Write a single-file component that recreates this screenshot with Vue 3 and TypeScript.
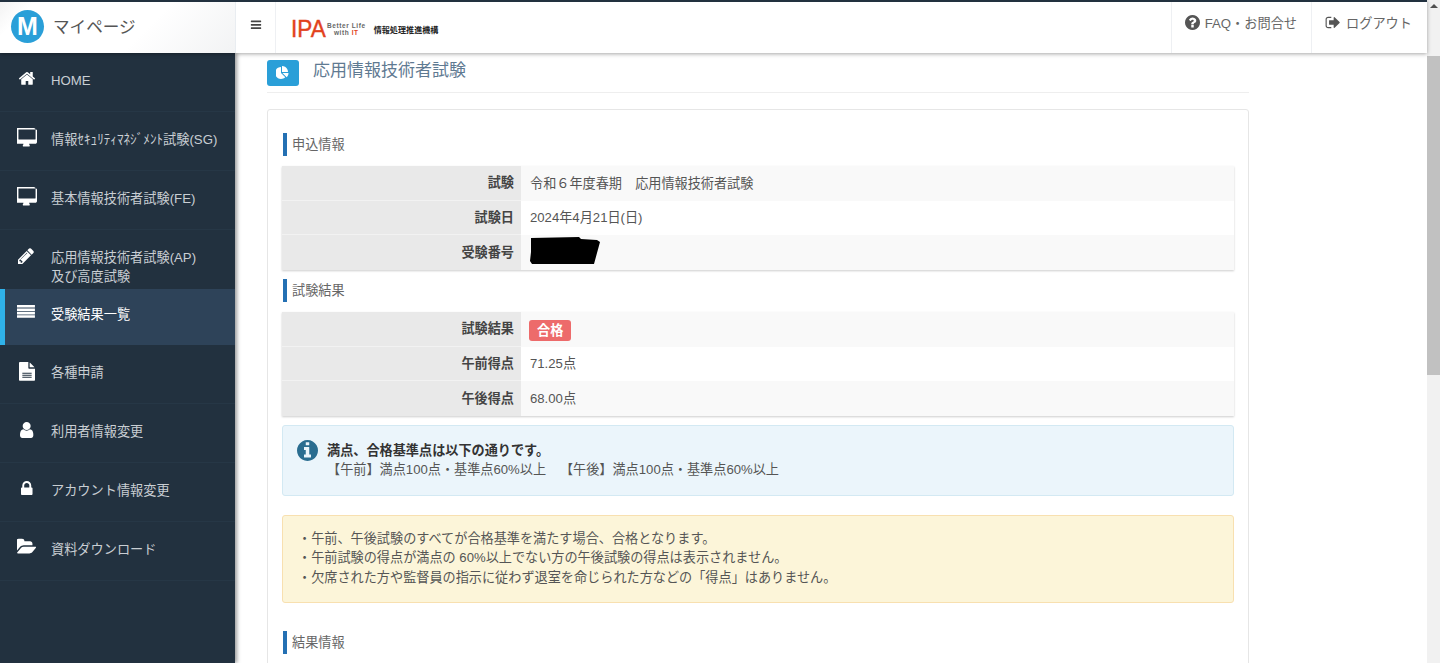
<script setup lang="ts">
const P = {
  home: 'M1472 992v480q0 26-19 45t-45 19h-384v-384h-256v384h-384q-26 0-45-19t-19-45v-480q0-1 .5-3t.5-3l575-474 575 474q1 2 1 6zm223-69l-62 74q-8 9-21 11h-3q-13 0-21-7l-692-577-692 577q-12 8-24 7-13-2-21-11l-62-74q-8-10-7-23.5t11-21.5l719-599q32-26 76-26t76 26l244 204v-195q0-14 9-23t23-9h192q14 0 23 9t9 23v408l219 182q10 8 11 21.5t-7 23.5z',
  desktop: 'M1664 1120v-832q0-13-9.5-22.5t-22.5-9.5h-1472q-13 0-22.5 9.5t-9.5 22.5v832q0 13 9.5 22.5t22.5 9.5h1472q13 0 22.5-9.5t9.5-22.5zm128-832v1088q0 66-47 113t-113 47h-544q0 37 16 77.5t32 71 16 43.5q0 26-19 45t-45 19h-512q-26 0-45-19t-19-45q0-14 16-44t32-70 16-78h-544q-66 0-113-47t-47-113v-1088q0-66 47-113t113-47h1472q66 0 113 47t47 113z',
  pencil: 'M491 1536l91-91-235-235-91 91v107h128v128h107zm523-928q0-22-22-22-10 0-17 7l-542 542q-7 7-7 17 0 22 22 22 10 0 17-7l542-542q7-7 7-17zm-54-192l416 416-832 832h-416v-416zm683 96q0 53-37 90l-166 166-416-416 166-165q36-38 90-38 53 0 91 38l235 234q37 39 37 91z',
  list: 'M0 256h1792v260H0zM0 596h1792v260H0zM0 936h1792v260H0zM0 1276h1792v260H0z',
  file: 'M1024 512V40q22 14 36 28l408 408q14 14 28 36h-472zM896 544q0 40 28 68t68 28h544v1056q0 40-28 68t-68 28H96q-40 0-68-28t-28-68V96q0-40 28-68T96 0h800v544zM320 1024v96h896v-96H320zm0 192v96h896v-96H320zm0 192v96h896v-96H320z',
  user: 'M1536 1399q0 109-62.5 187t-150.5 78h-854q-88 0-150.5-78t-62.5-187q0-85 8.5-160.5t31.5-152 58.5-131 94-89 134.5-34.5q131 128 313 128t313-128q76 0 134.5 34.5t94 89 58.5 131 31.5 152 8.5 160.5zm-256-887q0 159-112.5 271.5t-271.5 112.5-271.5-112.5-112.5-271.5 112.5-271.5 271.5-112.5 271.5 112.5 112.5 271.5z',
  lock: 'M640 768h512v-192q0-106-75-181t-181-75-181 75-75 181v192zm832 96v576q0 40-28 68t-68 28h-960q-40 0-68-28t-28-68v-576q0-40 28-68t68-28h32v-192q0-184 132-316t316-132 316 132 132 316v192h32q40 0 68 28t28 68z',
  folder: 'M1815 952q0 31-31 66l-336 396q-43 51-120.5 86.5t-143.5 35.5h-1088q-34 0-60.5-13t-26.5-43q0-31 31-66l336-396q43-51 120.5-86.5t143.5-35.5h1088q34 0 60.5 13t26.5 43zm-343-344v160h-832q-94 0-197 47.5t-164 119.5l-337 396-5 6q0-4-.5-12.5t-.5-12.5v-960q0-92 66-158t158-66h320q92 0 158 66t66 158v32h544q92 0 158 66t66 158z',
  bars: 'M1664 1344v128q0 26-19 45t-45 19h-1408q-26 0-45-19t-19-45v-128q0-26 19-45t45-19h1408q26 0 45 19t19 45zm0-512v128q0 26-19 45t-45 19h-1408q-26 0-45-19t-19-45v-128q0-26 19-45t45-19h1408q26 0 45 19t19 45zm0-512v128q0 26-19 45t-45 19h-1408q-26 0-45-19t-19-45v-128q0-26 19-45t45-19h1408q26 0 45 19t19 45z',
  pie: 'M768 890l546 546q-106 108-247.5 168t-298.5 60q-209 0-385.5-103t-279.5-279.5-103-385.5 103-385.5 279.5-279.5 385.5-103v762zm187 6h773q0 157-60 298.5t-168 247.5zm709-128h-768v-768q209 0 385.5 103t279.5 279.5 103 385.5z',
  question: 'M1024 1376v-192q0-14-9-23t-23-9h-192q-14 0-23 9t-9 23v192q0 14 9 23t23 9h192q14 0 23-9t9-23zm256-672q0-88-55.5-163t-138.5-116-170-41q-243 0-371 213-15 24 8 42l132 100q7 6 19 6 16 0 25-12 53-68 86-92 34-24 86-24 48 0 85.5 26t37.5 59q0 38-20 61t-68 45q-63 28-115.5 86.5t-52.5 125.5v36q0 14 9 23t23 9h192q14 0 23-9t9-23q0-19 21.5-49.5t54.5-49.5q32-18 49-28.5t46-35 44.5-48 28-60.5 12.5-81zm384 192q0 209-103 385.5t-279.5 279.5-385.5 103-385.5-103-279.5-279.5-103-385.5 103-385.5 279.5-279.5 385.5-103 385.5 103 279.5 279.5 103 385.5z',
  info: 'M1152 1376v-160q0-14-9-23t-23-9h-96v-512q0-14-9-23t-23-9h-320q-14 0-23 9t-9 23v160q0 14 9 23t23 9h96v320h-96q-14 0-23 9t-9 23v160q0 14 9 23t23 9h448q14 0 23-9t9-23zm-128-896v-160q0-14-9-23t-23-9h-192q-14 0-23 9t-9 23v160q0 14 9 23t23 9h192q14 0 23-9t9-23zm640 416q0 209-103 385.5t-279.5 279.5-385.5 103-385.5-103-279.5-279.5-103-385.5 103-385.5 279.5-279.5 385.5-103 385.5 103 279.5 279.5 103 385.5z',
  signout: 'M704 1440q0 4 1 20t.5 26.5-3 23.5-10 19.5-20.5 6.5h-320q-119 0-203.5-84.5t-84.5-203.5v-704q0-119 84.5-203.5t203.5-84.5h320q13 0 22.5 9.5t9.5 22.5q0 4 1 20t.5 26.5-3 23.5-10 19.5-20.5 6.5h-320q-66 0-113 47t-47 113v704q0 66 47 113t113 47h312l11.5 1 11.5 3 8 5.5 7 9 2 13.5zm928-544q0 26-19 45l-544 544q-19 19-45 19t-45-19-19-45v-288h-448q-26 0-45-19t-19-45v-384q0-26 19-45t45-19h448v-288q0-26 19-45t45-19 45 19l544 544q19 19 19 45z',
}

interface Nav { label: string; sub?: string; icon: string; vb: string; active?: boolean }
const nav: Nav[] = [
  { label: 'HOME', icon: P.home, vb: '-103 -44 2000 2000' },
  { label: '情報ｾｷｭﾘﾃｨﾏﾈｼﾞﾒﾝﾄ試験(SG)', icon: P.desktop, vb: '0 128 1792 1792' },
  { label: '基本情報技術者試験(FE)', icon: P.desktop, vb: '0 128 1792 1792' },
  { label: '応用情報技術者試験(AP)', sub: '及び高度試験', icon: P.pencil, vb: '32 -64 1920 1920' },
  { label: '受験結果一覧', icon: P.list, vb: '0 56 2000 2000', active: true },
  { label: '各種申請', icon: P.file, vb: '-192 -96 1920 1920' },
  { label: '利用者情報変更', icon: P.user, vb: '-32 -64 1920 1920' },
  { label: 'アカウント情報変更', icon: P.lock, vb: '-80 -72 2000 2000' },
  { label: '資料ダウンロード', icon: P.folder, vb: '0 66 1905 1905' },
]

const applyRows = [
  { th: '試験', td: '令和６年度春期　応用情報技術者試験' },
  { th: '試験日', td: '2024年4月21日(日)' },
  { th: '受験番号', td: '', redacted: true },
]
const resultRows = [
  { th: '試験結果', td: '', pass: true },
  { th: '午前得点', td: '71.25点' },
  { th: '午後得点', td: '68.00点' },
]
</script>

<template>
  <div class="page">
    <div class="viewport">
      <header class="topbar">
        <div class="brand">
          <span class="brand-mark">M</span>
          <span class="brand-name">マイページ</span>
        </div>
        <div class="toggle">
          <svg class="toggle-icon" viewBox="0 256 1792 1344"><path :d="P.bars" /></svg>
        </div>
        <div class="logo">
          <span class="logo-ipa">IPA</span>
          <span class="logo-tag"><span>Better Life</span><span>with <b>IT</b></span></span>
          <span class="logo-org">情報処理推進機構</span>
        </div>
        <nav class="top-links">
          <a class="top-link faq">
            <svg class="top-icon" viewBox="128 128 1536 1536"><path :d="P.question" /></svg>
            FAQ・お問合せ
          </a>
          <a class="top-link out">
            <svg class="top-icon" viewBox="0 128 1664 1536"><path :d="P.signout" /></svg>
            ログアウト
          </a>
        </nav>
      </header>

      <div class="below">
        <aside class="sidebar">
          <a v-for="n in nav" :key="n.label" class="nav-item" :class="{ active: n.active, two: n.sub }">
            <svg class="nav-icon" :viewBox="n.vb"><path :d="n.icon" /></svg>
            <span class="nav-label">{{ n.label }}<template v-if="n.sub"><br />{{ n.sub }}</template></span>
          </a>
        </aside>

        <main class="main">
          <div class="title-row">
            <span class="title-icon">
              <svg viewBox="128 0 1792 1792"><path :d="P.pie" /></svg>
            </span>
            <h1 class="title">応用情報技術者試験</h1>
          </div>

          <section class="card">
            <h2 class="heading">申込情報</h2>
            <div class="table">
              <div v-for="r in applyRows" :key="r.th" class="row">
                <div class="th">{{ r.th }}</div>
                <div class="td">
                  {{ r.td }}
                  <svg v-if="r.redacted" class="redact" viewBox="0 0 72 28">
                    <polygon points="2,1 50,0 52,2 68,3 71,5 65,27 3,27 1,24 2,15" />
                  </svg>
                </div>
              </div>
            </div>

            <h2 class="heading second">試験結果</h2>
            <div class="table">
              <div v-for="r in resultRows" :key="r.th" class="row">
                <div class="th">{{ r.th }}</div>
                <div class="td">
                  <span v-if="r.pass" class="badge">合格</span>
                  {{ r.td }}
                </div>
              </div>
            </div>

            <div class="alert-info">
              <svg class="info-icon" viewBox="128 128 1536 1536"><path :d="P.info" /></svg>
              <div>
                <strong>満点、合格基準点は以下の通りです。</strong><br />
                【午前】満点100点・基準点60%以上&nbsp;&nbsp;　【午後】満点100点・基準点60%以上
              </div>
            </div>

            <div class="alert-warn">
              ・午前、午後試験のすべてが合格基準を満たす場合、合格となります。<br />
              ・午前試験の得点が満点の 60%以上でない方の午後試験の得点は表示されません。<br />
              ・欠席された方や監督員の指示に従わず退室を命じられた方などの「得点」はありません。
            </div>

            <h2 class="heading third">結果情報</h2>
          </section>
        </main>
      </div>
    </div>

    <div class="scrollbar">
      <span class="arrow"></span>
      <span class="thumb"></span>
    </div>
  </div>
</template>

<style>
html, body { margin: 0; overflow: hidden; background: #fff; }
</style>

<style scoped>
.page {
  display: flex;
  width: 1440px;
  height: 663px;
  overflow: hidden;
  font-family: "Liberation Sans", "Noto Sans CJK JP", sans-serif;
  font-size: 13.15px;
  color: #555;
}
.viewport {
  flex: 1;
  min-width: 0;
  display: flex;
  flex-direction: column;
}
.topbar {
  position: relative;
  z-index: 3;
  flex: none;
  display: flex;
  align-items: stretch;
  height: 51px;
  border-top: 2px solid #22313f;
  background: #fff;
  box-shadow: 0 1px 4px rgba(0, 0, 0, .35);
}
.brand {
  width: 236px;
  flex: none;
  display: flex;
  align-items: center;
  gap: 9px;
  padding: 0 0 2px 11px;
  box-sizing: border-box;
  background: linear-gradient(135deg, #f3f3f3 0, #fff 12%, #fff 60%, #f2f3f4 100%);
  border-right: 1px solid #e9edf1;
}
.brand-mark {
  width: 33px;
  height: 33px;
  border-radius: 50%;
  background: #2a9fd8;
  color: #fff;
  font-weight: 700;
  font-size: 25px;
  line-height: 33px;
  text-align: center;
}
.brand-name {
  font-size: 16.6px;
  color: #555;
  margin-bottom: 2px;
}
.toggle {
  flex: none;
  display: flex;
  align-items: center;
  justify-content: center;
  padding-bottom: 5px;
  box-sizing: border-box;
  border-right: 1px solid #eef0f3;
  width: 40px;
}
.toggle-icon { width: 12px; height: 10px; fill: #444; }
.logo {
  display: flex;
  align-items: center;
  padding: 3px 0 0 15px;
  color: #222;
}
.logo-ipa {
  font-size: 24px;
  font-weight: 400;
  color: #e2421c;
  line-height: 1;
  -webkit-text-stroke: .4px #e2421c;
  transform: scaleX(.94);
  transform-origin: left center;
  margin-right: -3px;
}
.logo-tag {
  display: flex;
  flex-direction: column;
  align-items: center;
  margin-left: 2px;
  padding-bottom: 1px;
  font-size: 6.5px;
  line-height: 7px;
  font-weight: 700;
  color: #666;
  letter-spacing: .6px;
}
.logo-tag b { color: #e2421c; }
.logo-org {
  margin-left: 8px;
  font-size: 8.1px;
  font-weight: 700;
}
.top-links {
  margin-left: auto;
  display: flex;
}
.top-link {
  display: flex;
  align-items: center;
  gap: 5px;
  padding: 0 14px 10px 13px;
  border-left: 1px solid #eef0f3;
  font-size: 13.2px;
  color: #666;
}
.out { padding-right: 15px; gap: 6px; }
.top-icon { width: 15px; height: 15px; fill: #555; }

.below {
  flex: 1;
  min-height: 0;
  display: flex;
}
.sidebar {
  position: relative;
  z-index: 2;
  width: 235px;
  flex: none;
  background: #22313f;
  box-shadow: 2px 0 4px rgba(0, 0, 0, .4);
}
.nav-item {
  display: flex;
  box-sizing: border-box;
  height: 59px;
  padding: 18px 0 0 17px;
  gap: 14px;
  border-bottom: 1px solid #263746;
  color: #c9ced3;
  font-size: 13.2px;
  line-height: 19px;
}
.nav-item.two { border-bottom: 0; }
.nav-item.active {
  height: 56px;
  padding-left: 12px;
  border-left: 5px solid #2fb2ea;
  border-bottom: 0;
  background: #2e4359;
  color: #fff;
  padding-top: 16px;
}
.nav-icon {
  flex: none;
  width: 20px;
  height: 20px;
  fill: #fff;
  margin-top: -2px;
}
.nav-label { white-space: nowrap; }

.main {
  flex: 1;
  min-width: 0;
  overflow: hidden;
  padding: 7px 178px 0 32px;
  background: #fff;
}
.title-row {
  display: flex;
  gap: 14px;
  height: 32px;
  border-bottom: 1px solid #eee;
  margin-bottom: 16px;
}
.title-icon {
  width: 32px;
  height: 26px;
  border-radius: 3px;
  background: #2a9fd8;
  display: flex;
  align-items: center;
  justify-content: center;
}
.title-icon svg { width: 14px; height: 14px; fill: #fff; }
.title {
  margin: 1px 0 0;
  font-size: 17px;
  font-weight: 400;
  line-height: 20px;
  color: #5f7a92;
}
.card {
  border: 1px solid #e6e6e6;
  border-radius: 3px;
  padding: 23px 14px 40px;
}
.heading {
  margin: 0 0 10px 1px;
  height: 23px;
  border-left: 4px solid #2470b3;
  padding-left: 5px;
  font-size: 13.15px;
  font-weight: 400;
  line-height: 23px;
  color: #666;
}
.second { margin-top: 9px; }
.third { margin-top: 28px; }
.table {
  box-shadow: 0 1px 2px rgba(0, 0, 0, .2);
}
.row {
  display: grid;
  grid-template-columns: 239px 1fr;
  height: 34.67px;
}
.th {
  display: flex;
  align-items: center;
  justify-content: flex-end;
  padding: 0 7px 2px 0;
  background: #e9e9e9;
  border-bottom: 1px solid #f2f2f2;
  font-weight: 700;
  color: #444;
}
.row:last-child .th { border-bottom: 0; }
.td {
  display: flex;
  align-items: center;
  padding: 0 0 2px 9px;
  color: #555;
  background: #fff;
}
.row:nth-child(odd) .td { background: #f9f9f9; }
.redact { width: 72px; height: 28px; fill: #000; margin: 0 0 1px -1px; }
.badge {
  display: inline-block;
  margin: 4px 0 0 -1px;
  padding: 0 8px;
  height: 21px;
  line-height: 21px;
  border-radius: 3px;
  background: #ed6b6b;
  color: #fff;
  font-weight: 700;
}
.alert-info {
  display: flex;
  gap: 9px;
  height: 71px;
  box-sizing: border-box;
  margin-top: 9px;
  padding: 15px 14px 0;
  background: #ebf5fb;
  border: 1px solid #d3e9f3;
  border-radius: 3px;
  line-height: 19.5px;
  color: #555;
}
.alert-info strong { color: #333; }
.info-icon { flex: none; width: 21px; height: 21px; fill: #2a6d90; margin-top: -1px; }
.alert-warn {
  height: 88px;
  box-sizing: border-box;
  margin-top: 19px;
  padding: 13px 10px 0 15px;
  background: #fcf5d9;
  border: 1px solid #f8e0b0;
  border-radius: 3px;
  line-height: 19.5px;
  color: #555;
}

.scrollbar {
  flex: none;
  width: 13px;
  background: #f1f1f1;
  display: flex;
  flex-direction: column;
  align-items: center;
}
.arrow {
  margin-top: 4px;
  width: 0;
  height: 0;
  border-left: 4px solid transparent;
  border-right: 4px solid transparent;
  border-bottom: 4px solid #505050;
}
.thumb {
  margin-top: 48px;
  width: 100%;
  height: 319px;
  background: #c1c1c1;
}
</style>
